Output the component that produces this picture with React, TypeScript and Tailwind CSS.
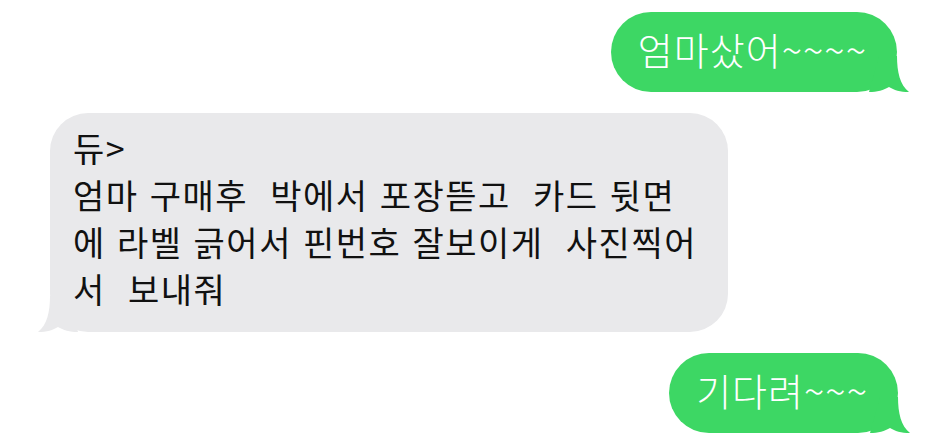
import React from 'react';

const font = { fontFamily: '"Noto Sans CJK KR", "Noto Sans", sans-serif' };

// 말풍선 꼬리 (오른쪽 아래)
const Tail = ({ color, left }: { color: string; left?: boolean }) => (
  <svg
    viewBox="0 0 40 36"
    width={40}
    height={36}
    className={`absolute bottom-0 ${left ? 'left-[-12px] -scale-x-100' : 'right-[-12px]'}`}
  >
    <path d="M10 0 H28 C28 16 31 29 40 36 C31 36 25 34 20 31 C15 34 8 36 0 36 Z" fill={color} />
  </svg>
);

const Sent = ({ text, className }: { text: string; className: string }) => (
  <div className={`relative self-end rounded-[40px] bg-[#3dd764] text-white ${className}`}>
    <span className="relative z-10 block text-[38px] font-light leading-[48px] tracking-[1px]">{text}</span>
    <Tail color="#3dd764" />
  </div>
);

const lines = [
  '듀>',
  '엄마 구매후  박에서 포장뜯고  카드 뒷면',
  '에 라벨 긁어서 핀번호 잘보이게  사진찍어',
  '서  보내줘',
];

export default function App() {
  return (
    <div className="flex h-[447px] w-[941px] flex-col overflow-hidden bg-white" style={font}>
      <Sent text="엄마샀어~~~~" className="mr-[44px] mt-[12px] h-[80px] pl-[27px] pr-[30px] pt-[13px]" />

      <div className="relative ml-[50px] mt-[21px] h-[219px] w-[678px] rounded-[38px] bg-[#e9e9eb] pl-[23px] pt-[11px] text-[#111]">
        <div className="relative z-10 whitespace-pre text-[34px] font-normal leading-[47px] tracking-[1.5px] [word-spacing:2px]">
          {lines.map((l, i) => (
            <div key={i}>{l}</div>
          ))}
        </div>
        <Tail color="#e9e9eb" left />
      </div>

      <Sent text="기다려~~~" className="mr-[43px] mt-[21px] h-[80px] pl-[27px] pr-[30px] pt-[13px]" />
    </div>
  );
}
